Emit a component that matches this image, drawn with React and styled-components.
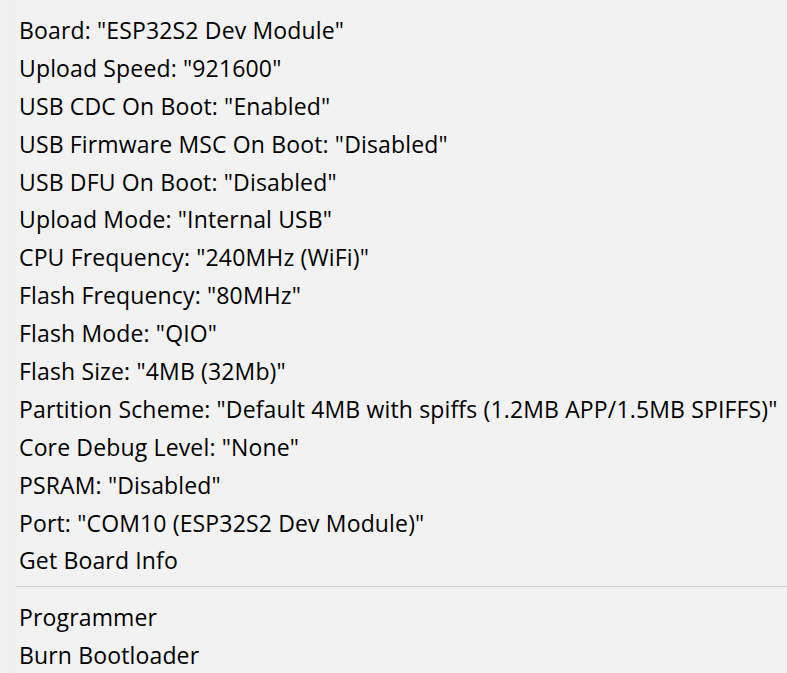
import styled, { createGlobalStyle } from "styled-components";

const GlobalStyle = createGlobalStyle`
  html, body {
    margin: 0;
    padding: 0;
    background: #f2f2f2;
  }
`;

const boardItems = [
  'Board: "ESP32S2 Dev Module"',
  'Upload Speed: "921600"',
  'USB CDC On Boot: "Enabled"',
  'USB Firmware MSC On Boot: "Disabled"',
  'USB DFU On Boot: "Disabled"',
  'Upload Mode: "Internal USB"',
  'CPU Frequency: "240MHz (WiFi)"',
  'Flash Frequency: "80MHz"',
  'Flash Mode: "QIO"',
  'Flash Size: "4MB (32Mb)"',
  'Partition Scheme: "Default 4MB with spiffs (1.2MB APP/1.5MB SPIFFS)"',
  'Core Debug Level: "None"',
  'PSRAM: "Disabled"',
  'Port: "COM10 (ESP32S2 Dev Module)"',
  "Get Board Info",
];

const toolItems = ["Programmer", "Burn Bootloader"];

export default function App() {
  return (
    <>
      <GlobalStyle />
      <Menu>
        {boardItems.map((label) => (
          <Item key={label}>{label}</Item>
        ))}
        <Separator />
        {toolItems.map((label) => (
          <Item key={label}>{label}</Item>
        ))}
      </Menu>
    </>
  );
}

const Menu = styled.div`
  display: flex;
  flex-direction: column;
  width: 787px;
  height: 673px;
  padding-top: 11px;
  box-sizing: border-box;
  overflow: hidden;
  background: linear-gradient(
    to right,
    #f0f0f0 0 14px,
    #ebebeb 14px 15px,
    #f2f2f2 15px
  );
`;

const Item = styled.div`
  height: 37.9px;
  flex-shrink: 0;
  display: flex;
  align-items: center;
  padding-left: 19px;
  font-family: "Open Sans", "Noto Sans", sans-serif;
  font-size: 23px;
  letter-spacing: 0.15px;
  color: #000;
  white-space: nowrap;
`;

const Separator = styled.div`
  height: 19px;
  flex-shrink: 0;
  margin-left: 16px;
  box-sizing: border-box;
  padding-top: 7px;

  &::after {
    content: "";
    display: block;
    height: 1px;
    background: #d3d3d3;
  }
`;
